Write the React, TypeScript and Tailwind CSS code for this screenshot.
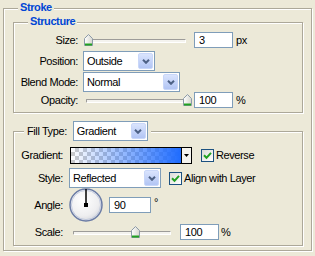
import React from "react";

const Chevron = () => (
  <svg width="8" height="5" viewBox="0 0 8 5">
    <polyline points="1,0.8 4,3.8 7,0.8" fill="none" stroke="#4d6185" strokeWidth="2" />
  </svg>
);

function Select({ value, w }: { value: string; w: string }) {
  return (
    <div className={`${w} h-[20px] flex items-center border border-[#7f9db9] bg-white`}>
      <span className="flex-1 pl-[3px] leading-none whitespace-nowrap overflow-hidden">{value}</span>
      <div className="w-[15px] h-[16px] mr-[1px] rounded-[2px] border border-[#c9d7f9] bg-gradient-to-b from-[#dae4fd] to-[#b2c5f4] flex items-center justify-center">
        <Chevron />
      </div>
    </div>
  );
}

function Thumb() {
  return (
    <svg width="9" height="12" viewBox="0 0 9 12">
      <defs>
        <linearGradient id="thg" x1="0" y1="0" x2="1" y2="0">
          <stop offset="0" stopColor="#ffffff" />
          <stop offset="1" stopColor="#d6d6ce" />
        </linearGradient>
      </defs>
      <path d="M0.5 4.5 L4.5 0.5 L8.5 4.5 V11.5 H0.5 Z" fill="url(#thg)" stroke="#8c9aa8" />
      <rect x="1" y="9.5" width="7" height="2" fill="#21a121" />
    </svg>
  );
}

function Slider({ w, pos }: { w: string; pos: string }) {
  return (
    <div className={`relative ${w} h-[12px]`}>
      <div className="absolute left-[2px] right-[6px] top-[5px] h-[4px] rounded-[1px] border border-t-[#9d9c99] border-l-[#9d9c99] border-b-white border-r-white bg-[#f4f3ee]" />
      <div className={`absolute top-0 ${pos} flex`}>
        <Thumb />
      </div>
    </div>
  );
}

function Input({ value, w }: { value: string; w: string }) {
  return (
    <div className={`${w} h-[16px] border border-[#7f9db9] bg-white flex items-center pl-[4px] leading-none`}>
      {value}
    </div>
  );
}

function Check() {
  return (
    <div className="w-[13px] h-[13px] border border-[#1c5180] bg-gradient-to-br from-[#dcdcd7] to-white flex items-center justify-center">
      <svg width="11" height="11" viewBox="0 0 11 11">
        <path d="M2 5.3 L4.5 7.8 L9 2.8" fill="none" stroke="#21a121" strokeWidth="2" />
      </svg>
    </div>
  );
}

function Dial() {
  return (
    <svg width="34" height="34" viewBox="0 0 34 34">
      <defs>
        <radialGradient id="dg" cx="0.4" cy="0.35" r="0.7">
          <stop offset="0" stopColor="#ffffff" />
          <stop offset="0.7" stopColor="#eeeef0" />
          <stop offset="1" stopColor="#d4d6dc" />
        </radialGradient>
      </defs>
      <circle cx="17" cy="17" r="16" fill="url(#dg)" stroke="#6b7ca5" strokeWidth="1.5" />
      <circle cx="17" cy="17" r="14.6" fill="none" stroke="#b9c3da" strokeWidth="0.8" />
      <line x1="17" y1="17" x2="17" y2="1" stroke="#000" strokeWidth="1.5" />
      <rect x="15" y="15" width="4" height="4" fill="#000" />
    </svg>
  );
}

const box =
  "border border-[#aca899] shadow-[inset_1px_1px_0_#fff,1px_1px_0_#fff]";

export default function App() {
  return (
    <div className="w-[315px] h-[256px] bg-[#ece9d8] pt-[8px] pl-[3px] text-[11px] tracking-[-0.4px] text-black font-['Liberation_Sans',Arial,sans-serif] overflow-hidden">
      <div className={`relative w-[309px] h-[243px] ${box}`}>
        <span className="absolute left-[14px] top-[-8px] px-[2px] bg-[#ece9d8] font-bold text-[#0046d5] leading-[13px]">
          Stroke
        </span>

        <div className={`relative ml-[9px] mt-[13px] w-[290px] h-[91px] ${box}`}>
          <span className="absolute left-[14px] top-[-8px] px-[2px] bg-[#ece9d8] font-bold text-[#0046d5] leading-[13px]">
            Structure
          </span>
          <div className="flex items-center h-[16px] mt-[9px]">
            <span className="w-[64px] text-right">Size:</span>
            <div className="ml-[6px]">
              <Slider w="w-[108px]" pos="left-[0px]" />
            </div>
            <div className="ml-[2px]">
              <Input value="3" w="w-[39px]" />
            </div>
            <span className="ml-[3px]">px</span>
          </div>
          <div className="flex items-center h-[20px] mt-[3px]">
            <span className="w-[64px] text-right">Position:</span>
            <div className="ml-[5px]">
              <Select value="Outside" w="w-[72px]" />
            </div>
          </div>
          <div className="flex items-center h-[20px] mt-[1px]">
            <span className="w-[64px] text-right">Blend Mode:</span>
            <div className="ml-[5px]">
              <Select value="Normal" w="w-[97px]" />
            </div>
          </div>
          <div className="flex items-center h-[16px]">
            <span className="w-[64px] text-right">Opacity:</span>
            <div className="ml-[6px]">
              <Slider w="w-[108px]" pos="left-[99px]" />
            </div>
            <div className="ml-[2px]">
              <Input value="100" w="w-[39px]" />
            </div>
            <span className="ml-[3px]">%</span>
          </div>
        </div>

        <div className={`relative ml-[9px] mt-[18px] w-[290px] h-[115px] ${box}`}>
          <div className="absolute left-[10px] top-[-11px] h-[20px] px-[3px] bg-[#ece9d8] flex items-center">
            <span>Fill Type:</span>
            <div className="ml-[6px]">
              <Select value="Gradient" w="w-[75px]" />
            </div>
          </div>

          <div className="flex items-center h-[17px] mt-[15px]">
            <span className="w-[49px] text-right">Gradient:</span>
            <div className="ml-[7px] w-[122px] h-[17px] border border-black flex">
              <div className="flex-1 bg-[repeating-conic-gradient(#cbcbcb_0_25%,#ffffff_0_50%)] bg-[length:8px_8px]">
                <div className="w-full h-full bg-gradient-to-r from-[rgba(40,110,255,0)] to-[#1f6cff]" />
              </div>
              <div className="w-[10px] border-l border-black bg-[#f4f3ee] flex items-center justify-center">
                <svg width="5" height="3" viewBox="0 0 5 3">
                  <path d="M0 0 H5 L2.5 3 Z" fill="#000" />
                </svg>
              </div>
            </div>
            <div className="ml-[9px]">
              <Check />
            </div>
            <span className="ml-[2px]">Reverse</span>
          </div>

          <div className="flex items-center h-[20px] mt-[4px]">
            <span className="w-[49px] text-right">Style:</span>
            <div className="ml-[6px]">
              <Select value="Reflected" w="w-[92px]" />
            </div>
            <div className="ml-[8px]">
              <Check />
            </div>
            <span className="ml-[2px]">Align with Layer</span>
          </div>

          <div className="flex items-center h-[34px]">
            <span className="w-[49px] text-right">Angle:</span>
            <div className="ml-[6px] flex">
              <Dial />
            </div>
            <div className="ml-[6px]">
              <Input value="90" w="w-[42px]" />
            </div>
            <span className="ml-[3px] self-start mt-[9px] leading-none">°</span>
          </div>

          <div className="flex items-center h-[16px] mt-[2px]">
            <span className="w-[49px] text-right">Scale:</span>
            <div className="ml-[8px]">
              <Slider w="w-[106px]" pos="left-[60px]" />
            </div>
            <div className="ml-[3px]">
              <Input value="100" w="w-[39px]" />
            </div>
            <span className="ml-[2px]">%</span>
          </div>
        </div>
      </div>
    </div>
  );
}
